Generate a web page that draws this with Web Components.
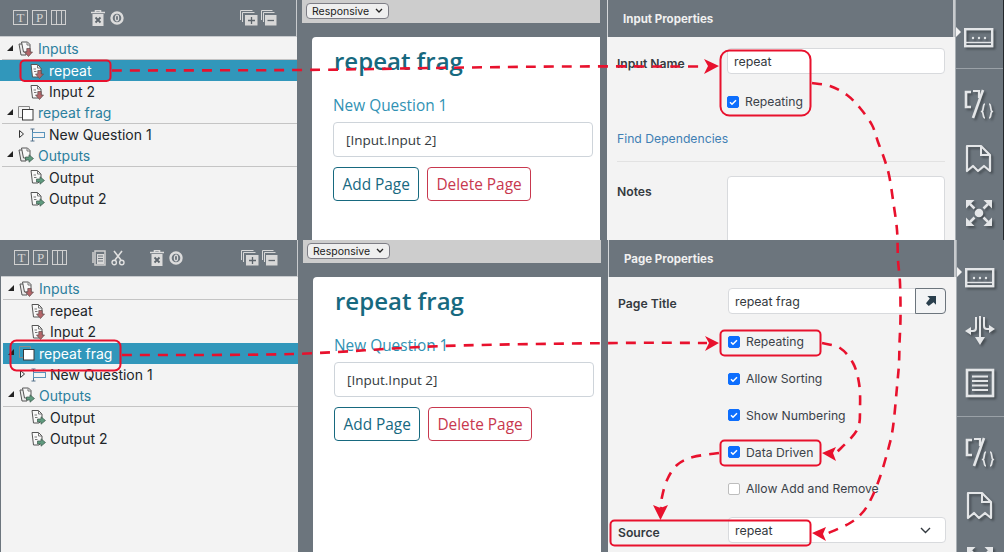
<!DOCTYPE html>
<html>
<head>
<meta charset="utf-8">
<style>
  html, body { margin: 0; padding: 0; }
  body { position: relative; width: 1004px; height: 552px; overflow: hidden; background: #6c757d; font-family: "Inter", "Liberation Sans", sans-serif; }
</style>
</head>
<body>
<shot-frame style="height:240px" dark-edge>
  <tree-panel>
    <tree-toolbar></tree-toolbar>
    <tree-node label="Inputs" icon="inputs" section open></tree-node>
    <tree-node label="repeat" icon="input" selected></tree-node>
    <tree-node label="Input 2" icon="input"></tree-node>
    <tree-node label="repeat frag" icon="page" section open></tree-node>
    <tree-node label="New Question 1" icon="question" closed></tree-node>
    <tree-node label="Outputs" icon="outputs" section open></tree-node>
    <tree-node label="Output" icon="output"></tree-node>
    <tree-node label="Output 2" icon="output"></tree-node>
  </tree-panel>
  <page-canvas></page-canvas>
  <props-panel heading="Input Properties">
    <prop-field label="Input Name"><text-box value="repeat"></text-box></prop-field>
    <check-row label="Repeating" checked></check-row>
    <link-row label="Find Dependencies"></link-row>
    <prop-field label="Notes" tall><text-box tall></text-box></prop-field>
  </props-panel>
  <icon-rail>
    <rail-icon name="dots" style="margin-top:28px"></rail-icon>
    <rail-rule style="margin-top:20px"></rail-rule>
    <rail-icon name="code" style="margin-top:20px"></rail-icon>
    <rail-icon name="doc" style="margin-top:25px"></rail-icon>
    <rail-icon name="move" style="margin-top:24px"></rail-icon>
  </icon-rail>
</shot-frame>
<shot-frame style="height:312px;padding-left:1px">
  <tree-panel>
    <tree-toolbar clipboard></tree-toolbar>
    <tree-node label="Inputs" icon="inputs" section open></tree-node>
    <tree-node label="repeat" icon="input"></tree-node>
    <tree-node label="Input 2" icon="input"></tree-node>
    <tree-node label="repeat frag" icon="page" section open selected></tree-node>
    <tree-node label="New Question 1" icon="question" closed></tree-node>
    <tree-node label="Outputs" icon="outputs" section open></tree-node>
    <tree-node label="Output" icon="output"></tree-node>
    <tree-node label="Output 2" icon="output"></tree-node>
  </tree-panel>
  <page-canvas></page-canvas>
  <props-panel heading="Page Properties">
    <prop-field label="Page Title"><text-box value="repeat frag" action></text-box></prop-field>
    <check-row label="Repeating" checked></check-row>
    <check-row label="Allow Sorting" checked></check-row>
    <check-row label="Show Numbering" checked></check-row>
    <check-row label="Data Driven" checked></check-row>
    <check-row label="Allow Add and Remove"></check-row>
    <prop-field label="Source" style="margin-top:20.5px"><text-box value="repeat" dropdown></text-box></prop-field>
  </props-panel>
  <icon-rail>
    <rail-icon name="dots" style="margin-top:28px"></rail-icon>
    <rail-icon name="fork" style="margin-top:27px"></rail-icon>
    <rail-icon name="list" style="margin-top:23px"></rail-icon>
    <rail-rule style="margin-top:18px"></rail-rule>
    <rail-icon name="code" style="margin-top:20px"></rail-icon>
    <rail-icon name="doc" style="margin-top:24px"></rail-icon>
    <rail-icon name="move" style="margin-top:24px"></rail-icon>
  </icon-rail>
</shot-frame>
<flow-arrows></flow-arrows>

<script>
const stack = `<path d="M1 3h7v11H3z" fill="#ececec" stroke="#555"/><path d="M3.500 1h6L12 3.500V11H5.500z" fill="#f8f8f8" stroke="#555"/><path d="M9 1.500V4h3" fill="none" stroke="#777"/>`;
const sheet = `<path d="M2 1.500h6.500L12 5v6l-3 3H3.500z" fill="#f8f8f8" stroke="#555"/><path d="M8.500 1.500V5H12M4.500 6H7M5 8.500h2.500" fill="none" stroke="#777"/>`;
const downArrow = `<path d="M8.800 7.500h3.400V11h2.300l-4 4.500-4-4.500h2.300z" fill="#b5666a" stroke="#5c4a4a" stroke-width=".7"/>`;
const rightArrow = `<path d="M7.500 10h3.500V7.800l4.500 3.700-4.500 3.700V13H7.500z" fill="#5f9a7e" stroke="#3f5a4d" stroke-width=".7"/>`;

// tree icons, 16x16
const treeIcons = {
  inputs: stack + downArrow,
  outputs: stack + rightArrow,
  input: sheet + downArrow,
  output: sheet + rightArrow,
  page: `<path d="M.5 1.500h11v11H.5z" fill="none" stroke="#8a8a8a"/><rect x="4.500" y="4.500" width="10.500" height="10.500" fill="#fff" stroke="#3a3a3a"/>`,
  question: `<path d="M3.500 2v12M1.500 2h4M1.500 14h4" fill="none" stroke="#55738c"/><rect x="3.500" y="5.500" width="12" height="5" fill="none" stroke="#5a94bb"/>`
};

const moveArm = `<path d="M28 2v8.500L19.500 2z" fill="currentColor"/><path d="M24 6l-4.500 4.500" stroke="currentColor" stroke-width="2.500"/>`;

// rail icons, 30x30 (dots is the short one)
const railIcons = {
  dots: `<svg width="30" height="20" viewBox="0 0 30 20"><rect x="1.200" y="1.200" width="27" height="17" fill="none" stroke="currentColor" stroke-width="2.400"/><path d="M2 14.500h26" stroke="currentColor" stroke-width="1.400"/><circle cx="9" cy="10" r="1.200" fill="currentColor"/><circle cx="15" cy="10" r="1.200" fill="currentColor"/><circle cx="21" cy="10" r="1.200" fill="currentColor"/></svg>`,
  code: `<svg width="30" height="30" viewBox="0 0 30 30"><path d="M7 3H2v15h5" fill="none" stroke="currentColor" stroke-width="2.600"/><path d="M9 2h6v7" fill="none" stroke="currentColor" stroke-width="2.200"/><path d="M19 1 9 29" stroke="currentColor" stroke-width="2.600"/><path d="M21 15c-2.500 0-1 6-3 7.500 2 1.500 .5 6.500 3 6.500M25 15c2.500 0 1 6 3 7.500-2 1.500-.5 6.500-3 6.500" fill="none" stroke="currentColor" stroke-width="1.700"/></svg>`,
  doc: `<svg width="30" height="30" viewBox="0 0 30 30"><path d="M3 2h14l9 9v16l-6-5-6 5-5-5-6 5z" fill="none" stroke="currentColor" stroke-width="2.200" stroke-linejoin="round"/><path d="M17 2v9h9" fill="none" stroke="currentColor" stroke-width="2"/></svg>`,
  move: `<svg width="30" height="30" viewBox="0 0 30 30"><circle cx="15" cy="15" r="4.300" fill="currentColor"/>${[0, 90, 180, 270].map(a => `<g transform="rotate(${a} 15 15)">${moveArm}</g>`).join("")}</svg>`,
  fork: `<svg width="30" height="30" viewBox="0 0 30 30"><path d="M15 1v22" fill="none" stroke="currentColor" stroke-width="2"/><path d="M10 22h10l-5 8z" fill="currentColor"/><path d="M11 2v11q0 3-3 3H4M19 2v9q0 3 3 3h4" fill="none" stroke="currentColor" stroke-width="2"/><path d="M6 12v8l-6-4zM24 10v8l6-4z" fill="currentColor"/></svg>`,
  list: `<svg width="30" height="30" viewBox="0 0 30 30"><rect x="2" y="2" width="26" height="26" fill="none" stroke="currentColor" stroke-width="2.600"/><path d="M7 8.500h16M7 13h16M7 17.500h16M7 22h16" stroke="currentColor" stroke-width="2"/></svg>`
};

class ShotFrame extends HTMLElement {
  constructor() {
    super();
    this.attachShadow({ mode: "open" });
    this.shadowRoot.innerHTML = `
      <style>
        :host { display: flex; width: 1004px; box-sizing: border-box; overflow: hidden; background: #6c757d; }
        :host([dark-edge]) { border-right: 1px solid #23272b; }
      </style>
      <slot></slot>`;
  }
}

class TreePanel extends HTMLElement {
  constructor() {
    super();
    this.attachShadow({ mode: "open" });
    this.shadowRoot.innerHTML = `
      <style>
        :host { display: flex; flex-direction: column; flex: 0 0 297px; background: #f3f3f3; box-sizing: border-box; }
      </style>
      <slot></slot>`;
  }
}

class TreeToolbar extends HTMLElement {
  constructor() {
    super();
    this.attachShadow({ mode: "open" });
  }

  connectedCallback() {
    const clip = this.hasAttribute("clipboard") ? `
      <svg style="margin-left:25px" width="14" height="16" viewBox="0 0 14 16"><path d="M1 2v11M3 1h10v14H3z" fill="none" stroke="#d0d0d0" stroke-width="1.500"/><path d="M5 4h7v10H5z" fill="#d8d8d8"/><path d="M6 6h5M6 8.500h5M6 11h5" stroke="#6c757d"/></svg>
      <svg style="margin-left:5px" width="14" height="16" viewBox="0 0 14 16"><path d="M3 1l7 9M11 1 4 10" stroke="#e0e0e0" stroke-width="1.600"/><circle cx="3.200" cy="12.500" r="2.200" fill="none" stroke="#e0e0e0" stroke-width="1.400"/><circle cx="10.800" cy="12.500" r="2.200" fill="none" stroke="#e0e0e0" stroke-width="1.400"/></svg>` : "";
    this.shadowRoot.innerHTML = `
      <style>
        :host { display: flex; align-items: center; height: 37px; margin-bottom: 1.67px; box-sizing: border-box; padding: 0 0 1px 13px; background: #6c757d; border-right: 1px solid #c8cbce; border-bottom: 1px solid #c8cbce; flex: none; }
        .box { width: 13px; height: 13px; border: 1px solid #d0d0d0; margin-right: 4px; font: 13px/13px "Liberation Serif", serif; color: #d4d4d4; text-align: center; }
        .cols { width: 13px; height: 13px; border: 1px solid #d0d0d0; background: linear-gradient(90deg, transparent 4px, #d0d0d0 4px, #d0d0d0 5px, transparent 5px, transparent 9px, #d0d0d0 9px, #d0d0d0 10px, transparent 10px); margin-right: 0; }
        svg { flex: none; }
        .end { margin-left: auto; display: flex; gap: 3px; margin-right: 19px; }
      </style>
      <span class="box">T</span><span class="box">P</span><span class="cols"></span>
      ${clip}
      <svg style="margin-left:25px" width="14" height="16" viewBox="0 0 14 16"><path d="M0 2.500h14M4.500 2V.500h5V2" fill="none" stroke="#dcdcdc" stroke-width="1.600"/><path d="M1.500 4h11v12h-11z" fill="#dcdcdc"/><path d="M4.500 7.500l5 5M9.500 7.500l-5 5" stroke="#5d656c" stroke-width="1.800"/></svg>
      <svg style="margin-left:5px" width="14" height="14" viewBox="0 0 14 14"><circle cx="7" cy="7" r="5.500" fill="none" stroke="#dcdcdc" stroke-width="2.400"/><ellipse cx="7" cy="7" rx="1.600" ry="2.800" fill="none" stroke="#dcdcdc" stroke-width="1.200"/></svg>
      <span class="end">
        <svg width="18" height="16" viewBox="0 0 18 16"><path d="M.5 10V.5h12M2.500 12V2.500h12" fill="none" stroke="#d8d8d8"/><rect x="5" y="5" width="12.500" height="10.500" fill="#d8d8d8"/><path d="M8 10.500h7M11.500 7v7" stroke="#5d656c" stroke-width="1.300"/></svg>
        <svg width="16" height="16" viewBox="0 0 16 16"><path d="M.5 10V.5h11M2.500 12V2.500h11" fill="none" stroke="#d8d8d8"/><rect x="4" y="5" width="11.500" height="10.500" fill="#d8d8d8"/><path d="M6.500 10.500h6.500" stroke="#5d656c" stroke-width="1.300"/></svg>
      </span>`;
  }
}

class TreeNode extends HTMLElement {
  constructor() {
    super();
    this.attachShadow({ mode: "open" });
  }

  connectedCallback() {
    let caret = "";
    if (this.hasAttribute("open")) {
      caret = `<svg class="caret" style="left:5px" width="6" height="6" viewBox="0 0 6 6"><path d="M0 6h6V0z" fill="#222"/></svg>`;
    } else if (this.hasAttribute("closed")) {
      caret = `<svg class="caret" style="left:19px" width="5" height="8" viewBox="0 0 5 8"><path d="M.5.500 4.500 4 .5 7.500z" fill="none" stroke="#333"/></svg>`;
    }
    this.shadowRoot.innerHTML = `
      <style>
        :host { display: flex; align-items: center; height: 21.33px; box-sizing: border-box; position: relative; flex: none; color: #212529; font-size: 14px; padding-left: 29px; }
        :host([section]) { margin-left: 2px; padding-left: 16px; color: #2c7f9e; border-bottom: 1px solid #c4c4c4; }
        :host([selected]) { background: #3197bb; color: #fff; border-bottom: 0; }
        .caret { position: absolute; top: 6px; }
        svg.icon { flex: none; margin-right: 4px; }
        span { white-space: nowrap; }
      </style>
      ${caret}
      <svg class="icon" width="16" height="16" viewBox="0 0 16 16">${treeIcons[this.getAttribute("icon")]}</svg>
      <span>${this.getAttribute("label")}</span>`;
  }
}

class PageCanvas extends HTMLElement {
  constructor() {
    super();
    this.attachShadow({ mode: "open" });
    this.shadowRoot.innerHTML = `
      <style>
        :host { display: flex; flex-direction: column; flex: 0 0 310px; box-sizing: border-box; padding: 0 7px 0 5px; background: #6c757d; font-family: "Open Sans", "Noto Sans", sans-serif; min-height: 0; }
        .bar { height: 23px; flex: none; background: #cdcdcd; display: flex; align-items: flex-start; padding: 3px 0 0 4px; box-sizing: border-box; }
        .pick { display: flex; align-items: center; justify-content: space-between; width: 83px; height: 16px; box-sizing: border-box; padding: 0 5px 0 5px; border: 1px solid #7d7d85; border-radius: 4px; background: #efefef; color: #222; font: 10.5px "Inter", "Liberation Sans", sans-serif; }
        .card { flex: 1; margin: 14px 0 0 10px; background: #fff; border-radius: 4px 0 0 0; padding: 10px 7px 0 21px; }
        h1 { margin: 0; padding: 0 0 0 1px; font-size: 24px; line-height: 28px; font-weight: 600; color: #17697f; }
        .q { margin: 20px 0 0; font-size: 15.4px; line-height: 22px; color: #3192b4; }
        .in { margin-top: 5px; height: 35px; box-sizing: border-box; border: 1px solid #ced4da; border-radius: 4px; padding: 0 12px; display: flex; align-items: center; font-size: 13.5px; color: #343a40; }
        .btns { display: flex; gap: 8px; margin-top: 10px; }
        .btn { height: 34px; box-sizing: border-box; padding: 0 8.5px; border: 1px solid #17697f; border-radius: 4px; display: flex; align-items: center; font-size: 15.4px; color: #17697f; }
        .btn.del { border-color: #c8384e; color: #c8384e; padding: 0 8px; }
      </style>
      <div class="bar"><div class="pick"><span>Responsive</span><svg width="8" height="6" viewBox="0 0 8 6"><path d="M1 1l3 3 3-3" fill="none" stroke="#222" stroke-width="1.300"/></svg></div></div>
      <div class="card">
        <h1>repeat frag</h1>
        <div class="q">New Question 1</div>
        <div class="in">[Input.Input 2]</div>
        <div class="btns"><div class="btn">Add Page</div><div class="btn del">Delete Page</div></div>
      </div>`;
  }
}

class PropsPanel extends HTMLElement {
  constructor() {
    super();
    this.attachShadow({ mode: "open" });
  }

  connectedCallback() {
    this.shadowRoot.innerHTML = `
      <style>
        :host { display: flex; flex-direction: column; flex: 0 0 348px; box-sizing: border-box; background: #f3f3f3; overflow: hidden; }
        header { height: 37px; flex: none; background: #6c757d; border-left: 1px solid #d4d7da; border-right: 2px solid #c8cbce; box-sizing: border-box; padding-left: 15px; display: flex; align-items: center; color: #f0f0f0; font-size: 11.5px; font-weight: 700; }
        .body { padding: 11px 10px 0 10px; display: flex; flex-direction: column; }
      </style>
      <header>${this.getAttribute("heading")}</header>
      <div class="body"><slot></slot></div>`;
  }
}

class PropField extends HTMLElement {
  constructor() {
    super();
    this.attachShadow({ mode: "open" });
  }

  connectedCallback() {
    this.shadowRoot.innerHTML = `
      <style>
        :host { display: grid; grid-template-columns: 110px 218px; align-items: center; flex: none; margin-bottom: -1px; }
        :host([tall]) { align-items: start; }
        label { font-size: 12.2px; font-weight: 600; color: #343a40; padding-top: 4px; }
        :host([tall]) label { padding-top: 8px; }
      </style>
      <label>${this.getAttribute("label")}</label>
      <slot></slot>`;
  }
}

class TextBox extends HTMLElement {
  constructor() {
    super();
    this.attachShadow({ mode: "open" });
  }

  connectedCallback() {
    const value = this.getAttribute("value") || "";
    let extra = "";
    if (this.hasAttribute("action")) {
      extra = `<span class="act"><svg width="10" height="10" viewBox="0 0 11 11"><path d="M1.500 0H11v9.500L8.300 6.800 3 11 0 8l4.200-5.300z" fill="#2a3f4d"/></svg></span>`;
    } else if (this.hasAttribute("dropdown")) {
      extra = `<svg class="chev" width="11" height="7" viewBox="0 0 11 7"><path d="M1 1l4.500 4.500L10 1" fill="none" stroke="#343a40" stroke-width="1.400"/></svg>`;
    }
    this.shadowRoot.innerHTML = `
      <style>
        :host { display: flex; align-items: center; justify-content: space-between; height: 26px; box-sizing: border-box; border: 1px solid #d8dadd; border-radius: 4px; background: #fff; padding-left: 6px; font-size: 12.4px; color: #343a40; position: relative; }
        :host([tall]) { height: 110px; }
        span.v { margin-top: 1px; }
        .act { display: flex; align-items: center; justify-content: center; width: 31px; height: 26px; margin-right: -1px; box-sizing: border-box; border: 1px solid #6c757d; border-radius: 0 4px 4px 0; background: #f3f4f5; }
        .chev { margin-right: 14px; }
      </style>
      <span class="v">${value}</span>${extra}`;
  }
}

class CheckRow extends HTMLElement {
  constructor() {
    super();
    this.attachShadow({ mode: "open" });
  }

  connectedCallback() {
    const on = this.hasAttribute("checked");
    const mark = on ? `<svg width="8" height="8" viewBox="0 0 8 8"><path d="M1 4.200l2 2 4-4" fill="none" stroke="#fff" stroke-width="1.500"/></svg>` : "";
    this.shadowRoot.innerHTML = `
      <style>
        :host { display: flex; align-items: center; height: 16px; margin: 20.8px 0 0 110px; gap: 6px; font-size: 12.2px; color: #3b4249; flex: none; }
        .b { width: 12px; height: 12px; box-sizing: border-box; border-radius: 2px; display: flex; align-items: center; justify-content: center; background: ${on ? "#0d6efd" : "#fff"}; border: 1px solid ${on ? "#0d6efd" : "#bdbdbd"}; }
        span { white-space: nowrap; }
      </style>
      <div class="b">${mark}</div><span>${this.getAttribute("label")}</span>`;
  }
}

class LinkRow extends HTMLElement {
  constructor() {
    super();
    this.attachShadow({ mode: "open" });
  }

  connectedCallback() {
    this.shadowRoot.innerHTML = `
      <style>
        :host { display: block; margin-top: 21px; height: 30px; flex: none; margin-bottom: 14px; border-bottom: 1px solid #e2e2e2; font-size: 12.2px; line-height: 16px; color: #3f7fb3; }
      </style>
      ${this.getAttribute("label")}`;
  }
}

class IconRail extends HTMLElement {
  constructor() {
    super();
    this.attachShadow({ mode: "open" });
    this.shadowRoot.innerHTML = `
      <style>
        :host { display: flex; flex-direction: column; flex: 1; min-width: 0; position: relative; box-sizing: border-box; background: #6c757d; border-left: 1px solid #a9afb4; overflow: hidden; }
        .tip { position: absolute; left: 0; top: 27px; width: 0; height: 0; border-left: 5px solid #f3f3f3; border-top: 5px solid transparent; border-bottom: 5px solid transparent; }
      </style>
      <div class="tip"></div>
      <slot></slot>`;
  }
}

class RailIcon extends HTMLElement {
  constructor() {
    super();
    this.attachShadow({ mode: "open" });
  }

  connectedCallback() {
    this.shadowRoot.innerHTML = `
      <style>
        :host { display: block; flex: none; padding-left: 8px; color: #e4e6e8; line-height: 0; }
        svg { filter: drop-shadow(2px 2px 1px rgba(40, 45, 50, .55)); }
      </style>
      ${railIcons[this.getAttribute("name")]}`;
  }
}

class RailRule extends HTMLElement {
  constructor() {
    super();
    this.attachShadow({ mode: "open" });
    this.shadowRoot.innerHTML = `<style>:host { display: block; height: 1px; flex: none; background: #9aa1a7; }</style>`;
  }
}

// red callouts drawn over the two screenshots
class FlowArrows extends HTMLElement {
  constructor() {
    super();
    this.attachShadow({ mode: "open" });
  }

  smooth(points) {
    let d = `M${points[0][0]} ${points[0][1]}`;
    for (let i = 0; i < points.length - 1; i++) {
      const p0 = points[i - 1] || points[i];
      const p1 = points[i];
      const p2 = points[i + 1];
      const p3 = points[i + 2] || p2;
      const c1 = [p1[0] + (p2[0] - p0[0]) / 6, p1[1] + (p2[1] - p0[1]) / 6];
      const c2 = [p2[0] - (p3[0] - p1[0]) / 6, p2[1] - (p3[1] - p1[1]) / 6];
      d += ` C${c1[0].toFixed(1)} ${c1[1].toFixed(1)} ${c2[0].toFixed(1)} ${c2[1].toFixed(1)} ${p2[0]} ${p2[1]}`;
    }
    return d;
  }

  connectedCallback() {
    const boxes = [
      [20.5, 60.5, 90, 20.5, 4],
      [720.5, 50.5, 90, 65, 9],
      [10.5, 340.5, 110, 30, 6],
      [720.5, 330.5, 100, 25, 4],
      [720.5, 440.5, 100, 25, 4],
      [610.5, 520.5, 200, 25, 4]
    ];
    const lines = [
      [[112, 70.5], [300, 70], [433, 68], [560, 66.5], [706, 66.5]],
      [[812, 83], [830, 86], [847, 95], [860, 108], [872, 125], [878, 142], [884, 158], [889, 175], [893, 200], [897, 230], [898, 260], [900, 283], [900.5, 317], [899.5, 343], [899, 363], [897, 387], [893, 427], [888, 450], [880, 477], [872, 497], [863, 512], [850, 523], [826, 534]],
      [[122, 355], [292, 354], [443, 346], [617, 343], [707, 343]],
      [[822, 343], [840, 348], [853, 363], [859, 383], [860, 407], [857, 430], [836, 453]],
      [[719, 453], [693, 457], [677, 465], [667, 480], [662, 497], [661, 508]]
    ];
    const heads = [
      "719,66 704,59 708,66 704,74",
      "812,533 826,527 823,534 826,541",
      "719,343 705,336 709,343 705,351",
      "822,453 836,447 833,453 836,461",
      "660.500,520 653,505 660.500,508 668,505"
    ];
    this.shadowRoot.innerHTML = `
      <style>
        :host { position: absolute; left: 0; top: 0; width: 1004px; height: 552px; pointer-events: none; display: block; }
        svg { display: block; }
        rect { fill: none; stroke: #e8112d; stroke-width: 2; }
        path { fill: none; stroke: #e8112d; stroke-width: 2.600; stroke-dasharray: 10 8; }
        polygon { fill: #e8112d; }
      </style>
      <svg width="1004" height="552" viewBox="0 0 1004 552">
        ${boxes.map(b => `<rect x="${b[0]}" y="${b[1]}" width="${b[2]}" height="${b[3]}" rx="${b[4]}"/>`).join("")}
        ${lines.map(l => `<path d="${this.smooth(l)}"/>`).join("")}
        ${heads.map(h => `<polygon points="${h}"/>`).join("")}
      </svg>`;
  }
}

customElements.define("shot-frame", ShotFrame);
customElements.define("tree-panel", TreePanel);
customElements.define("tree-toolbar", TreeToolbar);
customElements.define("tree-node", TreeNode);
customElements.define("page-canvas", PageCanvas);
customElements.define("props-panel", PropsPanel);
customElements.define("prop-field", PropField);
customElements.define("text-box", TextBox);
customElements.define("check-row", CheckRow);
customElements.define("link-row", LinkRow);
customElements.define("icon-rail", IconRail);
customElements.define("rail-icon", RailIcon);
customElements.define("rail-rule", RailRule);
customElements.define("flow-arrows", FlowArrows);
</script>
</body>
</html>
